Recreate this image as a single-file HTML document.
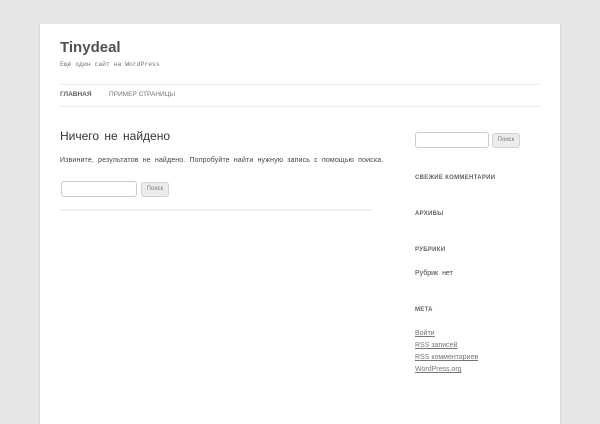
<!DOCTYPE html><html><head><meta charset="utf-8"><style>
body{margin:0;width:600px;height:400px;background:#e6e6e6;overflow:hidden;font-family:"Liberation Sans",sans-serif;color:#444;position:relative}
.page{position:absolute;left:40px;top:24px;width:520px;height:400px;background:#fff;box-shadow:0 1px 2px rgba(0,0,0,.2)}
.a{position:absolute;white-space:nowrap;line-height:1}
.hr{position:absolute;height:1px;background:#ededed}
.in{position:absolute;border:1px solid #ccc;border-radius:3px;background:#fff;box-sizing:border-box}
.bt{position:absolute;border:1px solid #d2d2d2;border-radius:3px;background:#ececec;box-sizing:border-box;font-size:6px;color:#7c7c7c;text-align:center}
.h{font-size:6px;font-weight:bold;color:#636363;letter-spacing:.3px}
.l{font-size:7px;color:#757575;text-decoration:underline}
</style></head><body><div class="page"></div>
<div class="a" style="left:60px;top:40px;font-size:15px;font-weight:bold;color:#515151">Tinydeal</div>
<div class="a" style="left:60px;top:62px;font-size:6.4px;font-family:'Liberation Mono',monospace;color:#757575">Ещё один сайт на WordPress</div>
<div class="hr" style="left:60px;top:84px;width:480px"></div>
<div class="a" style="left:60px;top:92px;font-size:6.5px;font-weight:bold;color:#5e5e5e">ГЛАВНАЯ</div>
<div class="a" style="left:109px;top:92px;font-size:6.5px;color:#757575">ПРИМЕР СТРАНИЦЫ</div>
<div class="hr" style="left:60px;top:106px;width:480px"></div>
<div class="a" style="left:60px;top:130px;font-size:12px;color:#333;word-spacing:2px">Ничего не найдено</div>
<div class="a" style="left:60px;top:157px;font-size:7px;color:#444;word-spacing:2px;letter-spacing:.15px">Извините, результатов не найдено. Попробуйте найти нужную запись с помощью поиска.</div>
<div class="in" style="left:61px;top:181px;width:76px;height:16px"></div>
<div class="bt" style="left:141px;top:182px;width:28px;height:15px;line-height:13px">Поиск</div>
<div class="hr" style="left:60px;top:209px;width:311px;height:2px;background:#f0f0f0"></div>
<div class="in" style="left:415px;top:132px;width:74px;height:16px"></div>
<div class="bt" style="left:492px;top:133px;width:28px;height:15px;line-height:13px">Поиск</div>
<div class="a h" style="left:415px;top:175px">СВЕЖИЕ КОММЕНТАРИИ</div>
<div class="a h" style="left:415px;top:211px">АРХИВЫ</div>
<div class="a h" style="left:415px;top:247px">РУБРИКИ</div>
<div class="a" style="left:415px;top:270px;font-size:7px;color:#444;word-spacing:2px">Рубрик нет</div>
<div class="a h" style="left:415px;top:307px">МЕТА</div>
<div class="a l" style="left:415px;top:330px">Войти</div>
<div class="a l" style="left:415px;top:342px">RSS записей</div>
<div class="a l" style="left:415px;top:354px">RSS комментариев</div>
<div class="a l" style="left:415px;top:366px">WordPress.org</div>
</body></html>
